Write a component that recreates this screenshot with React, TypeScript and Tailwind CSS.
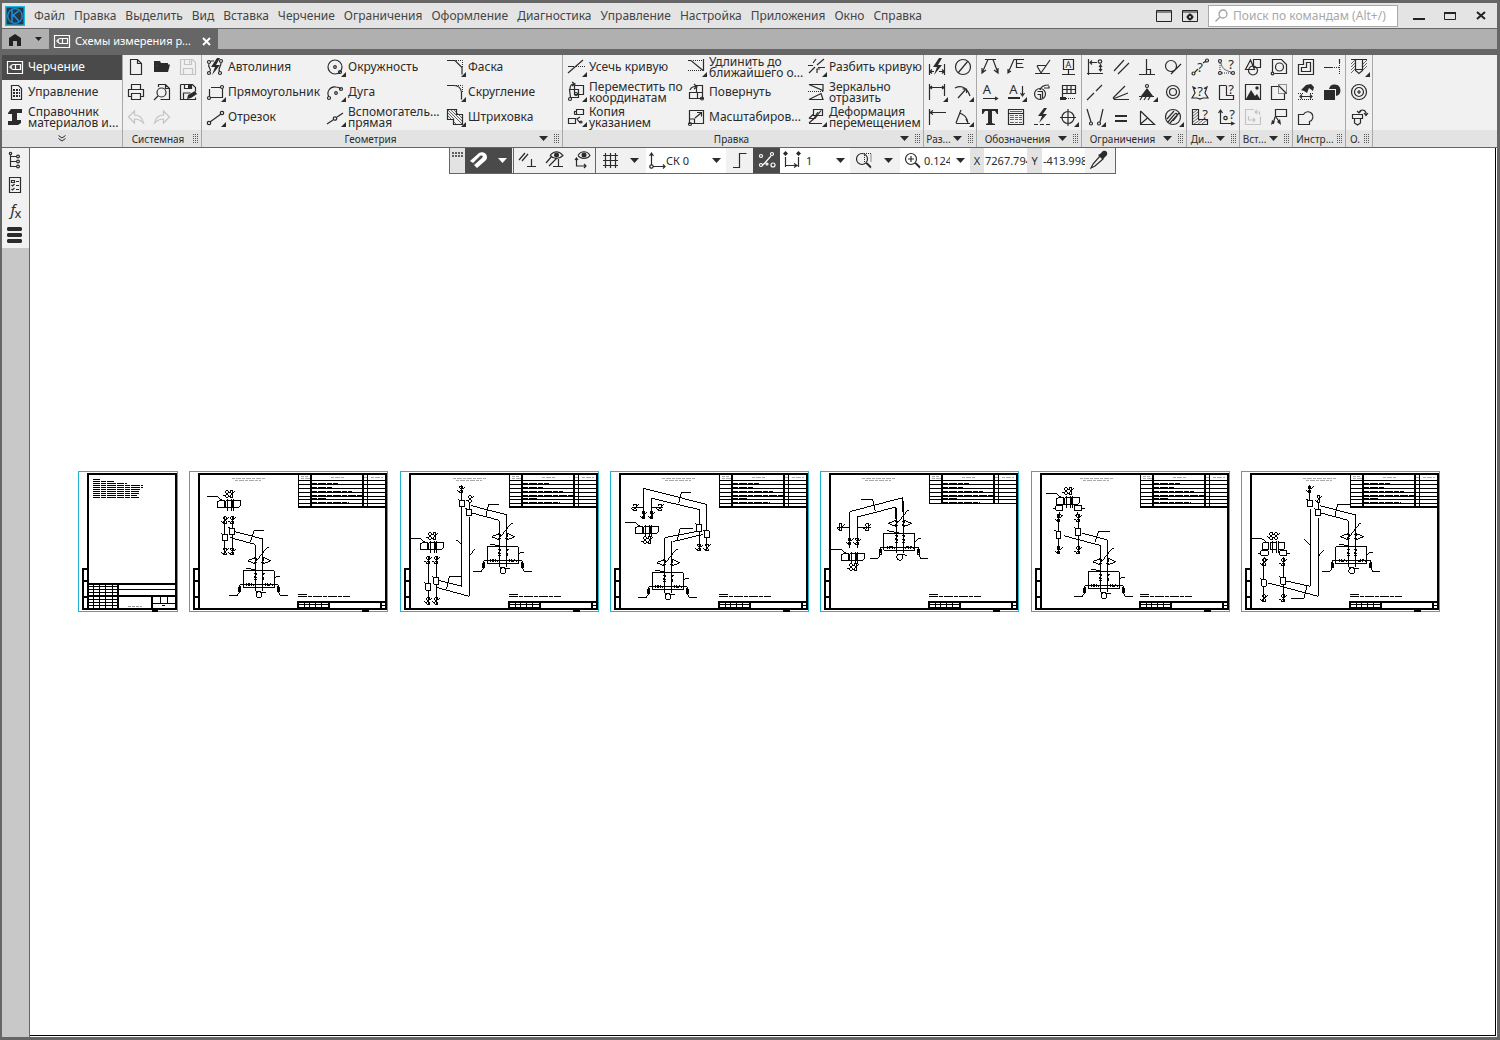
import type { ReactNode } from 'react';
import clsx from 'clsx';

type IconDef = {
  s?: string; // stroked
  f?: string; // filled
  h?: string; // hatching
  d?: string; // dotted
  t?: [number, number, number, string][]; // x, y, size, glyph
  corner?: boolean;
  muted?: boolean;
};

// circle as a path
const c = (x: number, y: number, r: number) =>
  `M${x - r} ${y}a${r} ${r} 0 1 0 ${2 * r} 0a${r} ${r} 0 1 0 ${-2 * r} 0`;

const BOLT = 'M15 3l-6 9h4l-3 8 8-10h-4l4-7z';

const icons: Record<string, IconDef> = {
  drawing: { s: 'M5.5 6.5h15v12h-15z M13.5 9.5h5v5h-5z M13 9.5h-2l-2 1v3l2 1h2 M7 12h3' },
  manage: { s: 'M9.5 5.5h7l3 3v11h-10z', f: 'M11 9h2v2h-2z M14 9h2v2h-2z M17 9h1v2h-1z M11 12h2v2h-2z M14 12h2v2h-2z M17 12h1v2h-1z M11 15h2v2h-2z M14 15h2v2h-2z M17 15h1v2h-1z' },
  library: { f: 'M6 8l3-4h11v4h-5v7h4v3l-3 2H6v-4h4V9H6z' },
  newFile: { s: 'M7.5 4.5h7l4 4v11h-11z M14.5 4.5v4h4' },
  open: { f: 'M5 17V6h6l1 2h7v2H8L7 17z M8.5 9.5h12.5l-2 7.5H6z' },
  save: { s: 'M5.5 4.5h12l3 3v12h-15z M9.5 4.5v5h7v-5 M8.5 19.5v-6h9v6 M14.5 5.5v3', muted: true },
  print: { s: 'M8.5 9.5v-5h9v5 M8.5 16.5h-3v-7h15v7h-3 M8.5 13.5h9v6h-9z' },
  preview: { s: 'M9.5 7V4.5h7l4 4v11h-9 M16.5 4.5v4h4 M9 16l-4 4 ' + c(12.5, 12.5, 4.5) },
  saveAs: { s: 'M5.5 4.5h12l3 3v4 M5.5 4.5v15h15v-2 M8.5 19v-6h7 M9.5 4.5v4h7v-4', f: 'M13 4h4v5h-4z M12 19l1-4 7-4 2 3-6 4z' },
  undo: { s: 'M5.5 12l6-6v4c5 0 8 3 9 8-3-3-5-4-9-4v4z', muted: true },
  redo: { s: 'M20.5 12l-6-6v4c-5 0-8 3-9 8 3-3 5-4 9-4v4z', muted: true },
  autoline: { s: 'M7 9c-2 3 4 6 0 8 M19 8c0 4-4 7-1 9 M9 6h3 ' + c(7, 7, 1.5) + c(19, 6, 1.5) + c(7, 18, 1.5) + c(18, 18, 1.5), f: BOLT },
  rect: { s: 'M7.5 9v8 M9 7.5h10 M20.5 9v8.5H8.5 ' + c(20, 7, 1.5) + c(7, 18, 1.5), corner: true },
  segment: { s: 'M8 17l11-8 ' + c(7, 18, 1.7) + c(20, 8, 1.7), corner: true },
  circle: { s: c(13, 12, 7) + c(13, 12, 1.3) + c(18, 17, 1.5), corner: true },
  arc: { s: 'M7 17C4 12 8 6 14 7c3 0 4 1 5 2 ' + c(7, 18, 1.5) + c(14, 13, 1.3) + c(19, 9, 1.5), corner: true },
  auxLine: { s: 'M5 19l6-4 M15 12l6-4 ' + c(13, 13.5, 1.7), corner: true },
  chamfer: { s: 'M5 5.5h8l7 7v7', d: 'M14 5.5h6.5v7', corner: true },
  fillet: { s: 'M5 5.5h7c5 0 7 3 7.5 7v7', d: 'M14 5.5h6.5v7', corner: true },
  hatch: { s: 'M5.5 4.5h9v5h6v10h-9v-5h-6z', h: 'M6 11l4 4 M6 8l6 6 M6 5l14 14 M9 5l11 11 M12 5l8 8 M12 17l2 2', corner: true },
  trim: { s: 'M5 18L20 5 M5 11.5h6', d: 'M13 11.5h9', corner: true },
  moveXY: { s: 'M6.5 9.5h9v8h-8z M11.5 5.5h9v9h-9z M7 9c0-3 1-5 4-5 M9 2l3 2-3 2 ' + c(7, 19, 1.5) + c(13, 14, 1.5), corner: true },
  copy: { s: 'M5.5 13.5h7v5h-7z M13.5 4.5h7v5h-7z M11.5 9.5v-3h2 M11.5 9.5h5 M17 12l-3 2 3 4 ' + c(18, 17, 1), corner: true },
  extend: { s: 'M20.5 4v12 M5 5.5h3l12 10', d: 'M5 15.5h14 M10 5.5h10', corner: true },
  rotate: { s: 'M6.5 12.5h8v6h-8z M13.5 5.5h6v13h-6 M13.5 5v7 M13 12.5h6 M7 10c1-3 4-4 7-3 M11 4l3 3-3 2 ' + c(19, 18.5, 1.5) },
  scale: { s: 'M6.5 5.5h14v13h-14z M12 13l6-5 M14 7.5h4.5v4 M6.5 14h5v5 ' + c(7, 19, 1.5) },
  split: { s: 'M6 18l6-6 M14 10l7-6 M5 10.5h5 M15 12.5h7 M10 8l3-4 M14 18v-4h3', corner: true },
  mirror: { s: 'M6 4.5h14v6l-14-6z M6 19.5h14l-2-6-12 6', d: 'M5 11.5h16' },
  deform: { s: 'M10.5 4.5h9v6h-9z M6 13.5h6l6-8 M6 18.5h13 M6 18l9-8 M6 13.5l4-4 M15 7l-5 8', corner: true },
  autoDim: { s: 'M5.5 9v11 M20.5 9v11 M6 16.5h4 M15 16.5h6 M8 14.5l-2 2 2 2 M18 14.5l2 2-2 2', f: BOLT },
  diameter: { s: c(13, 12, 7.5) + 'M8 18L18 6' },
  linearDim: { s: 'M5.5 4v16 M20.5 4v12 M6 7.5h14 M8 6l-2 1.5 2 1.5 M18 6l2 1.5-2 1.5', corner: true },
  radiusDim: { s: 'M5 8c8-4 13 2 15 8 M8 18l8-9 M12.5 9h4v4', corner: true },
  ordDim: { s: 'M5.5 4v16 M6 7.5h16 M9 5.5l-3 2 3 2' },
  angleDim: { s: 'M6 18.5h14 M6 18L11 5 M9 8c5 1 8 4 9 10 M16 14l2 4', corner: true },
  leader: { s: 'M5 18l6-13.5h5l5 13.5 M5 13v5l4-3 M17 15l4 3v-5 M8 4.5h11' },
  leaderE: { s: 'M5 18l6-13.5h10 M13.5 4.5v8h7 M13.5 8.5h6 M5 14v4l3-2' },
  rough: { s: 'M6 18.5h15 M8 11l4 7 9-13 M8 10.5h9' },
  baseA: { s: 'M8.5 4.5h10v10h-10z M13.5 15v4 M7 19.5h13', t: [[13.5, 13, 9, 'A']] },
  arrowA: { s: 'M6 18.5h14 M18 17l2.5 1.5-2.5 1.5', t: [[10, 14, 13, 'A']] },
  arrowADown: { s: 'M19.5 6v10 M17.5 13l2 3 2-3', f: 'M5 17h12v2H5z', t: [[10.5, 14, 13, 'A']], corner: true },
  weld: { s: c(11, 14, 5.5) + 'M8.5 11.5h5 M8.5 14.5h3v5 M13.5 11v7 M11 10c1-4 4-5 9-5 M20 6v2h-5' },
  flag: { s: 'M7.5 18.5v-13h13v8h-13 M12 5v8 M16 5v8 M7.5 9.5h13', f: 'M5 17h6v3H5z', d: 'M11 18.5h10' },
  text: { f: 'M5 4h16v5h-1l-2-3h-3v12l3 1v1H9v-1l2-1V6H8L6 9H5z' },
  table: { s: 'M5.5 4.5h15v15h-15z M5.5 8.5h15', h: 'M7 6.5h12 M7 10.5h4 M12 10.5h3 M16 10.5h3 M7 12.5h4 M12 12.5h3 M16 12.5h3 M7 14.5h4 M12 14.5h3 M16 14.5h3 M7 17.5h4 M12 17.5h3 M16 17.5h3' },
  boltLine: { f: 'M15 3l-6 8h4l-3 7 8-9h-4l4-6z', s: 'M5 19.5h4 M11 19.5h4 M17 19.5h4' },
  target: { s: c(13, 12.5, 6) + 'M5 12.5h16 M13 4v17', corner: true },
  fixDim: { s: 'M6.5 4v16 M5 18.5h16 M8 7.5h7 M10 5.5l-2 2 2 2 M18.5 9v7 M17 14l1.5 2 1.5-2 M17 12l1.5-2 1.5 2 ' + c(18, 6.5, 1.7) },
  parallel: { s: 'M6 16L16 5 M10 19L21 8' },
  perp: { s: 'M5 19.5h16 M12.5 4v15 M12.5 14.5h4v5' },
  tangent: { s: c(11, 11, 5.5) + 'M11 19L21 9' },
  collinear: { s: 'M5 20l7-7 M14 11l6-6' },
  angle: { s: 'M6 19.5h15 M5 18L17 6 M5 19l15-6' },
  fixed: { s: c(13, 6, 1.5) + 'M6 20l2-3 M10 20l2-3 M14 20l2-3 M5 16.5h15', f: 'M13 8l6 8H7z', corner: true },
  concentric: { s: c(13, 12, 6.5) + c(13, 12, 3.5) },
  symPoints: { s: 'M5 4l4 13 M21 4l-3 13 ' + c(9, 18.5, 1.5) + c(17, 18.5, 1.5), corner: true },
  equal: { f: 'M7 10h12v2H7z M7 15h12v2H7z' },
  triangle: { s: 'M6.5 6v13.5h14l-14-13.5 M6.5 19l7-6' },
  equalR: { s: c(13, 12, 7.5) + 'M7 14l7-8 M10 18l9-10 M8 17l6-7c2-3 4-1 3 1l-4 5', corner: true },
  measure: { s: 'M8 17l3-3 M16 8l3-2 ' + c(6.5, 18.5, 1.5) + c(20, 5.5, 1.5), t: [[13, 17, 13, '?']] },
  measureArc: { s: c(7, 6, 1.5) + c(7, 18, 1.5) + c(20, 18, 1.5), d: 'M7 8v9 M9 18h10', h: 'M8 8c1 5 3 7 10 9', t: [[18, 14, 13, '?']] },
  measureStar: { s: 'M9 8.5L6 7l2 6-3 5h5l3 1 3-1h5l-3-5 2-6-3 1.5', t: [[13, 16, 13, '?']] },
  measureL: { s: 'M13 5.5H6.5v14h14v-4h-7v-10', t: [[18, 14, 13, '?']] },
  measureHatch: { s: 'M5.5 4.5h6v10h9v5h-15z', h: 'M6 8l4-3 M6 11l5-4 M6 14l5-4 M6 17l5-4 M7 19l6-4 M11 19l5-4 M15 19l5-4', t: [[18, 14, 13, '?']] },
  measureXY: { s: 'M7.5 6v12.5h13 M5.5 8l2-3 2 3 M18 17l3 1.5-3 1.5 ' + c(12.5, 13, 1.7), t: [[19, 14, 13, '?']] },
  shapes: { s: 'M10.5 5l-5 9.5h9z M13.5 4.5h7v8h-7z ' + c(13, 15.5, 4.5) },
  fragment: { s: 'M6.5 17v-12.5h9l5 5v9h-12 ' + c(13.5, 12, 4) + c(6.5, 18.5, 1.3) },
  picture: { s: 'M5.5 4.5h15v15h-15z', f: 'M6 19l5-9 4 6 2-2 3 5z ' + c(17, 8, 1.7) },
  viewCut: { s: 'M12 6.5h-6.5v13h13v-6 M12.5 5.5l8 8', d: 'M12.5 4.5h8v9h-8z' },
  refreshDoc: { s: 'M14 4.5H5.5v15h15v-8 M8.5 11v4h6 M13 13l2 2-2 2 M19.5 10v-3h-4 M17 5l-2 2 2 2', muted: true },
  callout: { s: 'M9.5 4.5h11v7h-11z M9 12l-2 7 M10 12l4 6', f: 'M5 20l1-5 3 2z M15 20l-4-3 3-3z' },
  offset: { s: 'M5.5 19.5v-10h5v-5h10v15z M8.5 16.5v-4h5v-5h4v9z' },
  trimDot: { s: 'M5 12.5h8 M20.5 4v4', d: 'M13 12.5h7 M20.5 8v12' },
  cursorHatch: { f: 'M8 10l5-5 5-1 3 3-1 4-4-3-2 5-3-2z', d: 'M5 13.5h5 M17 13.5h4 M5 19.5h16', s: 'M8 16.5h10 M9 14.5l-2 2 2 2 M17 14.5l2 2-2 2' },
  boolean: { f: 'M5 10h11v10H5z M10 9a5.8 5.8 0 1 1 7 7V9z' },
  outline: { s: 'M5.5 19.5v-10h5a5 5 0 1 1 6 7v3z' },
  hole: { s: 'M9.5 4.5v11l3.5 3 3.5-3v-11 M9.5 14.5h7 M5 4.5h16', h: 'M5 9l4-4 M5 12l4-4 M5 15l4-4 M5 18l4-4 M17 9l4-4 M17 12l4-4 M17 15l4-4', corner: true },
  bore: { s: c(13, 12, 7.5) + c(13, 12, 4.5) + 'M11 12h4 M13 10v4' },
  screw: { s: 'M6.5 9.5h10v4h-10z M8.5 14v4l3 2 3-2v-4 M13 8c1-4 6-4 7 0v2 M18 8l2 2.5 2-2.5 M11 6l2 2 2-2' },
  magnet: { f: 'M4 13l9-8c3-2 8 0 8 4 0 2-1 3-2 4l-8 7-3-3 8-7c2-2 0-3-2-2l-7 7z' },
  parPerp: { s: 'M4 12l6-7 M7 13l6-7 M12 18.5h9 M16.5 11v7' },
  eyePar: { s: 'M4 15l6-7 M7 18l8-8 M11 18.5h10 M16.5 11v7 M8 7.5c4-5 9-5 13 0-4 4-9 4-13 0', f: c(14.5, 7, 2.5) },
  eyeAxes: { s: 'M7.5 10v8h9 M6 12l1.5-2 1.5 2 M15 16l2 2-2 2 M9 7.5c3-5 9-5 12 0-3 4-9 4-12 0', f: c(15, 7, 2.5) },
  grid: { s: 'M8.5 5v15 M13.5 5v15 M18.5 5v15 M6 7.5h15 M6 12.5h15 M6 17.5h15' },
  axes: { s: 'M5.5 17V5 M3.5 8l2-3 2 3 M7 18.5h12 M17 16.5l2 2-2 2 ' + c(5.5, 18.5, 1.7) },
  ortho: { s: 'M6 19.5h6.5v-14h7' },
  points: { s: 'M9 17l8-9 ' + c(7, 8, 1.5) + c(18, 6, 1.5) + c(7, 17, 1.5) + c(13, 16, 1) + c(19, 17, 2) },
  step: { s: 'M5.5 9v10 M6 17.5h10 M18.5 9v10 M14 15.5l3 2-3 2 M5.5 4v3 M4 5.5h3 M18.5 4v3 M17 5.5h3', f: 'M5.5 3l2.5 2.5-2.5 2.5-2.5-2.5z M18.5 3l2.5 2.5-2.5 2.5-2.5-2.5z' },
  zoomArea: { s: c(11, 11, 5.5) + 'M15 15l5 5 M16 15l4 4', d: 'M11 5.5h9v9 M13.5 5v9' },
  zoomIn: { s: c(11, 11, 5.5) + 'M8 11h6 M11 8v6 M15 15l5 5 M16 15l4 4' },
  dropper: { s: 'M14 8l-7 8-2 4 4-2 8-7', f: 'M12 7l2-1 3-3c3-1 5 1 4 4l-3 3-1 2z' },
  tree: { s: 'M8.5 7v11.5h6 M8.5 8.5h6 M8.5 13.5h6 ' + c(8.5, 5.5, 1.2) + c(16, 8.5, 1.4) + c(16, 13.5, 1.4) + c(16, 18.5, 1.4) },
  checklist: { s: 'M7.5 4.5h11v15h-11z M9.5 7.5h3v2h-3z M14 8.5h3 M9.5 12l1 1 2-2 M14 12.5h3 M9.5 16l1 1 2-2 M14 16.5h3' },
  fx: { t: [[11, 17, 15, 'f'], [16, 20, 13, 'x']] },
  layers: { f: 'M6 4h13l1 1v2l-1 1H6L5 7V5z M6 10h13l1 1v2l-1 1H6l-1-1v-2z M6 16h13l1 1v2l-1 1H6l-1-1v-2z' },
};

function Icon({ name }: { name: string }) {
  const i = icons[name];
  return (
    <svg width="26" height="25" viewBox="0 0 26 25" className={clsx('shrink-0', i.muted && 'text-[#c4c4c4]')} aria-hidden="true">
      {i.s && <path d={i.s} fill="none" stroke="currentColor" strokeWidth="1.2" />}
      {i.h && <path d={i.h} fill="none" stroke="currentColor" strokeWidth=".7" />}
      {i.d && <path d={i.d} fill="none" stroke="currentColor" strokeDasharray="1 1" />}
      {i.f && <path d={i.f} fill="currentColor" />}
      {i.t?.map(([x, y, size, glyph]) => (
        <text key={glyph} x={x} y={y} fontSize={size} textAnchor="middle" fill="currentColor" fontStyle={glyph === 'f' ? 'italic' : undefined}>
          {glyph}
        </text>
      ))}
      {i.corner && <path d="M24 17v5h-5z" fill="currentColor" />}
    </svg>
  );
}

const Caret = () => (
  <svg width="9" height="5" viewBox="0 0 9 5" className="shrink-0" aria-hidden="true">
    <path d="M0 0h9L4.5 5z" fill="currentColor" />
  </svg>
);

const Grip = () => (
  <svg width="5" height="9" viewBox="0 0 5 9" className="shrink-0" shapeRendering="crispEdges" aria-hidden="true">
    <path d="M.5 0v9 M2.5 0v9 M4.5 0v9" stroke="#555" strokeDasharray="1 1" />
  </svg>
);

const menu = ['Файл', 'Правка', 'Выделить', 'Вид', 'Вставка', 'Черчение', 'Ограничения', 'Оформление', 'Диагностика', 'Управление', 'Настройка', 'Приложения', 'Окно', 'Справка'];

type Tool = [icon: string, label?: string];
type Group = { title: string; tools: Tool[]; caret?: boolean };

// tools are listed column by column, three per column
const groups: Group[] = [
  { title: 'Системная', tools: [['newFile'], ['print'], ['undo'], ['open'], ['preview'], ['redo'], ['save'], ['saveAs']] },
  {
    title: 'Геометрия',
    caret: true,
    tools: [
      ['autoline', 'Автолиния'], ['rect', 'Прямоугольник'], ['segment', 'Отрезок'],
      ['circle', 'Окружность'], ['arc', 'Дуга'], ['auxLine', 'Вспомогатель...\nпрямая'],
      ['chamfer', 'Фаска'], ['fillet', 'Скругление'], ['hatch', 'Штриховка'],
    ],
  },
  {
    title: 'Правка',
    caret: true,
    tools: [
      ['trim', 'Усечь кривую'], ['moveXY', 'Переместить по\nкоординатам'], ['copy', 'Копия\nуказанием'],
      ['extend', 'Удлинить до\nближайшего о...'], ['rotate', 'Повернуть'], ['scale', 'Масштабиров...'],
      ['split', 'Разбить кривую'], ['mirror', 'Зеркально\nотразить'], ['deform', 'Деформация\nперемещением'],
    ],
  },
  { title: 'Раз...', caret: true, tools: [['autoDim'], ['linearDim'], ['ordDim'], ['diameter'], ['radiusDim'], ['angleDim']] },
  {
    title: 'Обозначения',
    caret: true,
    tools: [['leader'], ['arrowA'], ['text'], ['leaderE'], ['arrowADown'], ['table'], ['rough'], ['weld'], ['boltLine'], ['baseA'], ['flag'], ['target']],
  },
  {
    title: 'Ограничения',
    caret: true,
    tools: [['fixDim'], ['collinear'], ['symPoints'], ['parallel'], ['angle'], ['equal'], ['perp'], ['fixed'], ['triangle'], ['tangent'], ['concentric'], ['equalR']],
  },
  { title: 'Ди...', caret: true, tools: [['measure'], ['measureStar'], ['measureHatch'], ['measureArc'], ['measureL'], ['measureXY']] },
  { title: 'Вст...', caret: true, tools: [['shapes'], ['picture'], ['refreshDoc'], ['fragment'], ['viewCut'], ['callout']] },
  { title: 'Инстр...', tools: [['offset'], ['cursorHatch'], ['outline'], ['trimDot'], ['boolean']] },
  { title: 'О.', tools: [['hole'], ['bore'], ['screw']] },
];

function ToolButton({ tool: [icon, label] }: { tool: Tool }) {
  return (
    <button type="button" aria-label={label ?? icon} className={clsx('flex items-center text-left leading-[11px]', label ? 'w-[120px]' : 'w-[26px]')}>
      <Icon name={icon} />
      {label && <span className="pb-[2px] whitespace-pre">{label}</span>}
    </button>
  );
}

function RibbonGroup({ group }: { group: Group }) {
  return (
    <section className="flex shrink-0 flex-col border-r border-[#a8a8a8]">
      <div className="grid grow grid-flow-col grid-rows-[25px_25px_25px] justify-start">
        {group.tools.map((tool) => (
          <ToolButton key={tool[0]} tool={tool} />
        ))}
      </div>
      <footer className="flex h-[17px] items-center bg-[#e3e3e3] pr-[3px] text-[10px]">
        <span className="w-0 grow text-center whitespace-nowrap">{group.title}</span>
        {group.caret && <span className="mr-[6px]"><Caret /></span>}
        <Grip />
      </footer>
    </section>
  );
}

const sections = [
  { icon: 'drawing', label: 'Черчение', active: true },
  { icon: 'manage', label: 'Управление' },
  { icon: 'library', label: 'Справочник\nматериалов и...' },
];

function Ribbon() {
  return (
    <div className="flex border-b border-[#666] bg-[#f1f1f1]">
      <nav className="flex w-[121px] shrink-0 flex-col border-r border-[#a8a8a8]">
        {sections.map((s) => (
          <button key={s.label} type="button" className={clsx('flex h-[25px] items-center text-left leading-[11px]', s.active && 'bg-[#4a4a4a] text-white')}>
            <Icon name={s.icon} />
            <span className="pb-[2px] whitespace-pre">{s.label}</span>
          </button>
        ))}
        <button type="button" aria-label="Развернуть" className="flex h-[17px] items-center justify-center bg-[#e3e3e3]">
          <svg width="8" height="7" viewBox="0 0 8 7" fill="none" stroke="currentColor"><path d="M.5.5L4 3 7.5.5 M.5 3.5L4 6l3.5-2.5" /></svg>
        </button>
      </nav>
      {groups.map((g) => (
        <RibbonGroup key={g.title} group={g} />
      ))}
      <div className="flex grow flex-col justify-end">
        <div className="h-[17px] bg-[#e3e3e3]" />
      </div>
    </div>
  );
}

function TitleBar() {
  return (
    <header className="flex h-[26px] items-center border-b border-[#666] bg-[#e4e4e4] text-[#444]">
      <svg width="20" height="20" viewBox="0 0 20 20" className="mr-[9px] ml-[3px] shrink-0" fill="none">
        <rect x=".75" y=".75" width="18.5" height="18.5" fill="#263845" stroke="#1eb4dc" strokeWidth="1.5" />
        <circle cx="10" cy="10" r="7.3" stroke="#1d8fe0" strokeWidth="1.3" />
        <path d="M7 3.5v13 M7 10l7-5.5 M8.5 9l6 7 M7 10h3" stroke="#1d8fe0" strokeWidth="1.5" />
      </svg>
      <nav className="flex grow gap-[9px]">
        {menu.map((m) => (
          <button key={m} type="button" className="whitespace-nowrap">{m}</button>
        ))}
      </nav>
      <div className="flex items-center gap-[10px] text-[#222]">
        <button type="button" aria-label="Окно">
          <svg width="16" height="12" viewBox="0 0 16 12" fill="none" stroke="currentColor"><path d="M.5.5h15v11H.5z M0 2h16" /></svg>
        </button>
        <button type="button" aria-label="Настройка интерфейса">
          <svg width="16" height="12" viewBox="0 0 16 12" fill="none" stroke="currentColor">
            <path d="M.5.5h15v11H.5z M0 2h16" />
            <circle cx="8" cy="7" r="2" strokeWidth="2" />
            <path d="M8 3.5v1.5 M8 9v1.5 M4.5 7H6 M10 7h1.5" strokeWidth="1.5" />
          </svg>
        </button>
        <label className="flex h-[22px] w-[190px] items-center gap-[5px] border border-[#a8a8a8] bg-white pl-[6px] text-[#a0a0a0]">
          <svg width="13" height="13" viewBox="0 0 13 13" fill="none" stroke="currentColor" strokeWidth="1.3" className="shrink-0"><circle cx="8" cy="5" r="4" /><path d="M5 8l-4.5 4.5" /></svg>
          <input type="text" aria-label="Поиск по командам" placeholder="Поиск по командам (Alt+/)" className="w-0 grow outline-none placeholder:text-[#a8a8a8]" />
        </label>
      </div>
      <div className="ml-[5px] flex pr-px text-[#222]">
        <button type="button" aria-label="Свернуть" className="flex w-[31px] justify-center"><svg width="12" height="12"><path d="M0 8h12v2H0z" fill="currentColor" /></svg></button>
        <button type="button" aria-label="Развернуть окно" className="flex w-[31px] justify-center"><svg width="12" height="12" fill="none" stroke="currentColor"><path d="M.5 2.5h11v7H.5z" /><path d="M0 3h12" strokeWidth="2" /></svg></button>
        <button type="button" aria-label="Закрыть" className="flex w-[31px] justify-center"><svg width="12" height="12" stroke="currentColor" strokeWidth="2"><path d="M2 2l8 7 M10 2L2 9" /></svg></button>
      </div>
    </header>
  );
}

function TabBar() {
  return (
    <div className="flex h-[26px] border-b-[6px] border-[#666] bg-[#b0b0b0]">
      <button type="button" aria-label="Главная" className="flex w-[26px] items-center justify-center text-[#222]">
        <svg width="14" height="13" viewBox="0 0 14 13"><path d="M1 5l6-4 6 4v8H9V8H5v5H1z" fill="currentColor" /></svg>
      </button>
      <button type="button" aria-label="Список документов" className="flex w-[21px] items-center justify-center text-[#222]">
        <svg width="7" height="4"><path d="M0 0h7L3.5 4z" fill="currentColor" /></svg>
      </button>
      <div className="flex h-[26px] w-[169px] shrink-0 items-center bg-[#666] pb-[2px] text-white">
        <Icon name="drawing" />
        <span className="text-[11px] whitespace-nowrap">Схемы измерения р...</span>
        <button type="button" aria-label="Закрыть вкладку" className="mr-[7px] ml-auto">
          <svg width="9" height="9" stroke="currentColor" strokeWidth="2"><path d="M1 1l7 7 M8 1L1 8" /></svg>
        </button>
      </div>
    </div>
  );
}

function BarButton({ icon, className }: { icon: string; className?: string }) {
  return (
    <button type="button" aria-label={icon} className={clsx('flex w-[27px] shrink-0 items-center justify-center', className)}>
      <Icon name={icon} />
    </button>
  );
}

const BarCaret = () => (
  <button type="button" aria-label="Список" className="flex w-[20px] shrink-0 items-center justify-center">
    <Caret />
  </button>
);

function ViewBar() {
  return (
    <div className="absolute top-0 left-[419px] flex h-[26px] w-[667px] border border-t-0 border-[#666] bg-[#f1f1f1] text-[11px]">
      <div className="flex w-[15px] justify-center bg-[#e3e3e3] pt-1">
        <svg width="11" height="8"><path d="M0 1h11 M0 4h11" stroke="#333" strokeWidth="1.5" strokeDasharray="2 1" /></svg>
      </div>
      <div className="flex w-[47px] bg-[#4a4a4a] text-white">
        <BarButton icon="magnet" />
        <BarCaret />
      </div>
      <div className="ml-px flex border-x border-[#666]">
        <BarButton icon="parPerp" />
        <BarButton icon="eyePar" />
        <BarButton icon="eyeAxes" />
      </div>
      <BarButton icon="grid" />
      <div className="flex w-[23px] justify-center">
        <BarCaret />
      </div>
      <div className="flex w-[80px] items-center bg-white">
        <Icon name="axes" />
        <span className="-ml-[6px] grow whitespace-nowrap">СК 0</span>
        <BarCaret />
      </div>
      <BarButton icon="ortho" />
      <BarButton icon="points" className="bg-[#4a4a4a] text-white" />
      <div className="flex w-[70px] items-center bg-white">
        <Icon name="step" />
        <input aria-label="Шаг курсора" defaultValue="1" className="w-0 grow outline-none" />
        <BarCaret />
      </div>
      <BarButton icon="zoomArea" />
      <div className="flex w-[23px] justify-center">
        <BarCaret />
      </div>
      <div className="flex w-[70px] items-center bg-white">
        <Icon name="zoomIn" />
        <input aria-label="Масштаб" defaultValue="0.1249" className="-ml-[2px] w-0 grow outline-none" />
        <BarCaret />
      </div>
      <label className="flex w-[57px] items-center bg-[#e3e3e3]">
        <span className="w-[14px] text-center">X</span>
        <input defaultValue="7267.7946" className="h-full w-0 grow bg-white pl-px outline-none" />
      </label>
      <label className="flex w-[58px] items-center bg-[#e3e3e3]">
        <span className="w-[15px] text-center">Y</span>
        <input defaultValue="-413.9985" className="h-full w-0 grow bg-white pl-px outline-none" />
      </label>
      <BarButton icon="dropper" />
    </div>
  );
}

/* Drawing content. Schematics use three units per screen pixel. */

const Valve = ({ x, y }: { x: number; y: number }) => (
  <path d={`M${x - 4} ${y - 10}h8v6l-8 8v6h8v-6l-8-8z M${x + 12} ${y - 10}l-8 8 M${x - 12} ${y + 2}l8 6`} />
);

const Box = ({ x, y, w = 14, h = 20 }: { x: number; y: number; w?: number; h?: number }) => (
  <path d={`M${x - w / 2} ${y - h / 2}h${w}v${h}h${-w}z M${x - w / 2} ${y - h / 2}l-6-5`} fill="#fff" />
);

// two feeders into a cubicle with a meter underneath
const Station = ({ x, y }: { x: number; y: number }) => (
  <g transform={`translate(${x} ${y})`}>
    <path d="M-37 0h93v51h-93z M0-76v46 M22-96v66 M0-30V60 M22-30V60" />
    <path d="M-48 42h116 M-48 42v18 M68 42v18 M-51 48h6v16h-6z M65 48h6v16h-6z M-48 64l-8 12h-24 M68 64l6 12h22" />
    <path d="M0-40l-24 10 24 10z M22-40l24 10-24 10z M-4-36h8l-8 12h8 M18-36h8l-8 12h8 M3-30l30-38h6 M-28-8l40 8 M56 25l8-8h10" />
    <path d="M-28 38l8 8 8-8 8 8 M-28 46l8-8 8 8 M28 38l8 8 8-8 8 8 M28 46l8-8 8 8 M2 62l30 4" />
    <path d="M-4 8h8l-8 12h8l-8 8h8 M18 8h8l-8 12h8l-8 8h8" />
    <circle cx="10" cy="72" r="9" />
  </g>
);

const Trio = ({ x, y, below, sides }: { x: number; y: number; below?: boolean; sides?: boolean }) => (
  <g transform={`translate(${x} ${y})`}>
    <path d="M-34 2v19h20v-21h-14z M-10 0h20v21h-20z M14 0v21h14l6-6v-15z M-68-13h32l14 12 M-4-6v38 M8-6v38 M14-6v38" />
    <Valve x={-7} y={below ? 40 : -20} />
    <Valve x={7} y={below ? 40 : -20} />
    {sides && <path d="M-38 25h22v13h-22z M18 25h22v13h-22z M-46 32h8 M40 32h10 M-20 54l-10-12 M22 54l8-12" />}
  </g>
);

const Feeder = ({ x, y, box, end }: { x: number; y: number; box: number; end: number }) => (
  <g>
    <path d={`M${x} ${y - 14}V${end}`} />
    <Valve x={x} y={y} />
    <Box x={x} y={box} />
    <Valve x={x} y={end - 10} />
  </g>
);

type Sheet = { x: number; title: number; rows: number; art: ReactNode };

const sheets: Sheet[] = [
  {
    x: 111, title: 43, rows: 7,
    art: (
      <>
        <Trio x={121} y={89} />
        <Feeder x={108} y={148} box={200} end={252} />
        <Feeder x={130} y={148} box={182} end={252} />
        <path d="M138 182l84 22 M124 200l74 20 M184 214l12-36h30" />
        <Station x={200} y={299} />
      </>
    ),
  },
  {
    x: 322, title: 53, rows: 7,
    art: (
      <>
        <Valve x={184} y={56} />
        <Valve x={210} y={84} />
        <Box x={186} y={98} />
        <Box x={208} y={125} />
        <path d="M184 42v46 M210 94v20 M186 108v238l-72-18 M208 138v238l-96-26 M214 104l108 28 M216 126l82 22 M258 134l8-34h32 M186 220l-18-14 M208 256l16-22 M140 354l8-36h38" />
        <Trio x={97} y={215} />
        <Feeder x={85} y={268} box={348} end={400} />
        <Feeder x={109} y={268} box={330} end={400} />
        <Station x={299} y={227} />
      </>
    ),
  },
  {
    x: 532, title: 52, rows: 7,
    art: (
      <>
        <path d="M101 140V52l188 48v84 M125 140V82l144 34v70 M206 96l8-30h28 M66 110h34 M126 110h34 M164 200l94-18 M188 212l92-22 M164 200v30 M202 206l8-32h40" />
        <Valve x={75} y={110} />
        <Valve x={150} y={110} />
        <Valve x={101} y={132} />
        <Valve x={125} y={132} />
        <Trio x={112} y={167} below />
        <path d="M268 180v60 M291 198v42" />
        <Box x={268} y={172} />
        <Box x={291} y={190} />
        <Valve x={268} y={230} />
        <Valve x={291} y={230} />
        <Station x={164} y={305} />
      </>
    ),
  },
  {
    x: 742, title: 42, rows: 6,
    art: (
      <>
        <path d="M89 230V122l160-42v44 M112 230V138l116-30v36 M124 85h34l8 36 M52 169h37 M112 169h40" />
        <Valve x={62} y={169} />
        <Valve x={142} y={169} />
        <Valve x={89} y={212} />
        <Valve x={112} y={212} />
        <Trio x={100} y={248} below />
        <Station x={229} y={187} />
      </>
    ),
  },
  {
    x: 953, title: 49, rows: 7,
    art: (
      <>
        <Trio x={112} y={80} sides />
        <Feeder x={83} y={142} box={192} end={248} />
        <Feeder x={142} y={142} box={184} end={248} />
        <path d="M152 186l80 22 M98 194l112 30 M192 214l10-32h34" />
        <Station x={209} y={302} />
      </>
    ),
  },
  {
    x: 1163, title: 62, rows: 7,
    art: (
      <>
        <Valve x={206} y={56} />
        <Valve x={233} y={84} />
        <Box x={208} y={98} />
        <Box x={231} y={125} />
        <path d="M206 42v46 M233 94v20 M208 114v232l-72-16 M232 142v234l-150-40 M236 104l108 28v40 M240 126l82 22 M282 134l8-34h38 M208 222l-18-16 M232 256l18-20 M150 384h38l10-38" />
        <Trio x={98} y={215} sides />
        <Feeder x={69} y={274} box={336} end={392} />
        <Feeder x={127} y={274} box={330} end={392} />
        <Station x={322} y={227} />
      </>
    ),
  },
];

const tableRows = [9.5, 13.5, 17.5, 21.5, 25.5, 28.5, 32.5, 36];

function DrawingSheet({ sheet }: { sheet: Sheet }) {
  const bottom = tableRows[sheet.rows];
  return (
    <g transform={`translate(${sheet.x} 0)`} fill="none" stroke="#000">
      <path d="M.5.5h198v140H.5z" stroke="#20b4d4" />
      <path d="M10 3h187v135H10z M5 98h5v40H5z M5 110h5 M5 126h5" strokeWidth="2" />
      <path d={`M109.5 3v${bottom - 3}h88 M122 3v${bottom - 3} M174 3v${bottom - 3} M178.500 3v${bottom - 3}`} strokeWidth="1.5" />
      <path d={tableRows.slice(0, sheet.rows).map((y) => `M109 ${y}h88`).join(' ')} />
      <path d="M123 12.5h26 M123 16.5h20 M123 20.5h40 M123 24.5h50 M123 27.5h14 M123 31.5h37" strokeDasharray="5 1 8 1" />
      <path d={`M${sheet.title} 7.5h34 M${sheet.title + 3} 9.5h26 M112 5.5h7 M112 7.5h9 M142 6.5h13 M175 6.5h3 M182 6.5h12`} stroke="#aaa" strokeDasharray="3 1 5 1" />
      <path d="M109 123.5h10 M109 125.5h52" strokeDasharray="9 1 4 1" />
      <path d="M109 138v-7.5h88 M140 131v7 M192 131v7 M173 140h7" strokeWidth="2" />
      <path d="M109 133.5h31 M109 136h31 M115 131v7 M120 131v7 M126 131v7 M132 131v7 M192 134.5h6" />
      <g transform="scale(.33333)" strokeWidth="3">{sheet.art}</g>
    </g>
  );
}

function Canvas() {
  return (
    <svg viewBox="0 0 1362 141" shapeRendering="crispEdges" className="w-[1362px] max-w-none" role="img" aria-label="Листы чертежа">
      <g fill="none" stroke="#000">
        <path d="M.5.5h99v140H.5z" stroke="#20b4d4" />
        <path d="M10 3h88v135H10z M5 98h5v40H5z M5 110h5 M5 126h5 M10 112.5h88 M40 112v26 M74 126v12 M40 124.5h58 M10 124.5h30 M74 140h6" strokeWidth="2" />
        <path d="M40 118.5h58 M10 115.5h30 M10 118.5h30 M10 121.5h30 M10 128.5h30 M10 131.5h30 M10 134.5h30 M15.5 113v25 M21.5 113v25 M27.5 113v25 M34.5 113v25 M74 132.5h24 M82.5 126v6 M89.5 126v6 M84 134.5h3" />
        <path d="M15 8.5h8 M15 10.5h21 M15 12.5h34 M15 14.5h50 M15 16.5h50 M15 18.5h47 M15 20.5h46 M15 22.5h46 M15 24.5h44 M15 26.5h46" strokeDasharray="7 1 5 1 9 1" />
        <path d="M50 135.5h14" stroke="#999" strokeDasharray="3 1" />
      </g>
      {sheets.map((s) => (
        <DrawingSheet key={s.x} sheet={s} />
      ))}
    </svg>
  );
}

export default function App() {
  return (
    <div className="flex min-h-screen flex-col border-[3px] border-l-2 border-[#666] bg-white font-['Noto_Sans','Open_Sans',sans-serif] text-[12px] leading-4 text-[#2b2b2b]">
      <TitleBar />
      <TabBar />
      <Ribbon />
      <div className="flex grow">
        <aside className="w-[28px] shrink-0 border-r border-[#666] bg-[#c8c8c8]">
          <div className="flex flex-col bg-[#f1f1f1]">
            {['tree', 'checklist', 'fx', 'layers'].map((name) => (
              <button key={name} type="button" aria-label={name} className="h-[25px]">
                <Icon name={name} />
              </button>
            ))}
          </div>
        </aside>
        <main className="relative mr-px mb-px grow overflow-hidden border-r border-b border-black pt-[323px] pl-12">
          <ViewBar />
          <Canvas />
        </main>
      </div>
    </div>
  );
}
